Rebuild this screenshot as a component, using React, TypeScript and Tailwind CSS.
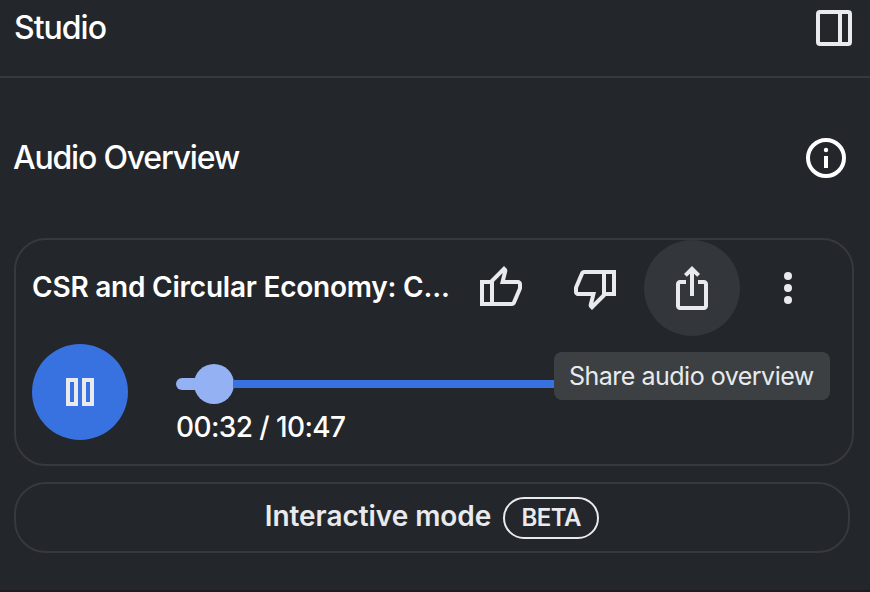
import React from "react";

type IconProps = { className?: string };

const THUMB =
  "M720-120H280v-520l280-280 50 50q7 7 11.5 19t4.5 23v14l-44 174h258q32 0 56 24t24 56v80q0 7-2 15t-4 15L794-168q-9 20-30 34t-44 14Zm-360-80h360l120-280v-80H480l54-220-174 174v406Zm0-406v406-406Zm-80-34v80H160v360h120v80H80v-520h200Z";

function Thumb({ className = "" }: IconProps) {
  return (
    <svg viewBox="0 -960 960 960" className={`size-12 shrink-0 fill-[#e8eaed] ${className}`}>
      <path d={THUMB} />
    </svg>
  );
}

function Share() {
  return (
    <svg viewBox="0 -960 960 960" className="size-12 fill-[#e8eaed]">
      <path d="M240-40q-33 0-56.5-23.5T160-120v-440q0-33 23.5-56.5T240-640h120v80H240v440h480v-440H600v-80h120q33 0 56.5 23.5T800-560v440q0 33-23.5 56.5T720-40H240Zm200-280v-447l-64 64-56-57 160-160 160 160-56 57-64-64v447h-80Z" />
    </svg>
  );
}

function More() {
  return (
    <svg viewBox="0 0 48 48" className="size-12 shrink-0 fill-[#e8eaed]">
      <circle cx="24" cy="12" r="4" />
      <circle cx="24" cy="24" r="4" />
      <circle cx="24" cy="36" r="4" />
    </svg>
  );
}

function PanelIcon() {
  return (
    <svg viewBox="0 0 36 36" className="size-9 fill-none stroke-[#e8eaed] stroke-4">
      <rect x="2" y="2" width="32" height="32" rx="2" />
      <path d="M24 2v32" />
    </svg>
  );
}

function InfoIcon() {
  return (
    <svg viewBox="0 0 40 40" className="size-10">
      <circle cx="20" cy="20" r="18" className="fill-none stroke-white stroke-4" />
      <circle cx="20" cy="12" r="2.2" className="fill-white" />
      <path d="M18 18h4v12h-4z" className="fill-white" />
    </svg>
  );
}

export default function App() {
  return (
    <div className="flex h-[592px] w-[870px] flex-col overflow-hidden border-b-2 border-[#1d1a20] bg-[#23262a] font-['Inter',sans-serif] whitespace-nowrap text-white">
      <header className="flex h-[78px] shrink-0 items-start justify-between border-b-2 border-[#37393c] pt-[10px] pr-[18px] pl-[14px]">
        <h1 className="text-[32px] leading-9 font-[450] tracking-[-1px]">Studio</h1>
        <PanelIcon />
      </header>

      <div className="mt-[60px] flex h-10 shrink-0 items-center justify-between pr-6 pl-[13px]">
        <h2 className="text-[32px] leading-10 font-[450] tracking-[-1.2px]">Audio Overview</h2>
        <InfoIcon />
      </div>

      <section className="mt-[60px] ml-[14px] h-[228px] w-[840px] shrink-0 rounded-[32px] border-2 border-[#37393c] px-4">
        <div className="flex h-24 items-center">
          <div className="w-[444px] pb-[2px] text-[28px] leading-9 font-semibold tracking-[-0.23px]">
            CSR and Circular Economy: C...
          </div>
          <Thumb />
          <Thumb className="ml-12 rotate-180" />
          <div className="relative ml-6 flex size-24 shrink-0 items-center justify-center rounded-full bg-[#33363b]">
            <Share />
            <div className="absolute top-28 left-[-90px] flex h-12 w-[276px] items-center rounded-lg bg-[#3c4043] pb-px pl-[15px] text-[25px] leading-8 tracking-[-0.5px] text-[#e8eaed]">
              Share audio overview
            </div>
          </div>
          <div className="ml-6">
            <More />
          </div>
        </div>
        <div className="mt-2 flex">
          <div className="flex size-24 items-center justify-center gap-1 rounded-full bg-[#3871e0]">
            <span className="h-7 w-3 border-4 border-[#e8eaed]" />
            <span className="h-7 w-3 border-4 border-[#e8eaed]" />
          </div>
          <div className="ml-12 flex w-[480px] flex-col pt-5">
            <div className="flex h-10 w-[420px] items-center">
              <span className="h-3 w-6 rounded-l-full bg-[#94b2f3]" />
              <span className="-ml-[6px] size-10 shrink-0 rounded-full bg-[#94b2f3]" />
              <span className="-ml-px h-2 grow bg-[#3871e0]" />
            </div>
            <div className="mt-[5px] text-[28px] leading-9 font-[450] tracking-[-0.6px]">00:32 / 10:47</div>
          </div>
        </div>
      </section>

      <button className="mt-4 ml-[14px] flex h-[71px] w-[836px] shrink-0 items-center justify-center rounded-[32px] border-2 border-[#37393c] text-[#e8eaed]">
        <span className="pb-[3px] text-[28px] leading-9 font-semibold tracking-[-0.05px]">Interactive mode</span>
        <span className="ml-3 flex h-[42px] w-24 items-center justify-center rounded-[21px] border-2 border-[#e8eaed] text-2xl font-semibold tracking-[-0.5px]">
          BETA
        </span>
      </button>
    </div>
  );
}
